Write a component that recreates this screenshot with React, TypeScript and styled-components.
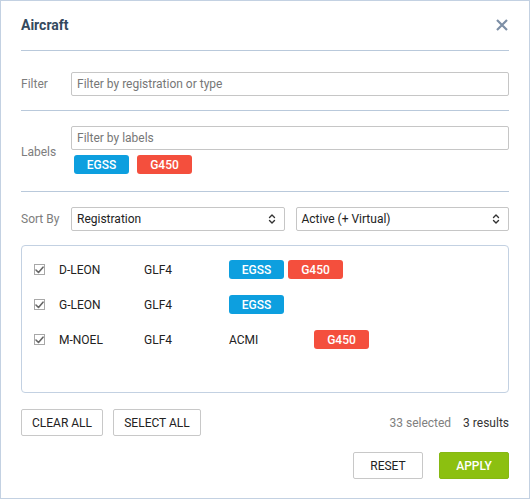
import React from "react";
import styled, { createGlobalStyle } from "styled-components";

const GlobalStyle = createGlobalStyle`
  html, body { margin: 0; padding: 0; background: #fff; }
  body { font-family: Roboto, "Liberation Sans", Arial, sans-serif; font-size: 12px; color: #333; }
  * { box-sizing: border-box; }
`;

const Dialog = styled.div`
  width: 530px;
  height: 499px;
  border: 1px solid #c3d1e2;
  padding: 0 20px;
  display: flex;
  flex-direction: column;
  background: #fff;
`;

const Header = styled.div`
  height: 50px;
  padding-bottom: 2px;
  display: flex;
  align-items: center;
  justify-content: space-between;
  border-bottom: 1px solid #b9c9db;
`;

const Title = styled.h1`
  margin: 0;
  font-size: 14px;
  font-weight: 700;
  color: #34495e;
`;

const CloseButton = styled.button`
  border: 0;
  background: none;
  padding: 0;
  width: 14px;
  height: 14px;
  display: flex;
  align-items: center;
  justify-content: center;
  cursor: pointer;
`;

const Section = styled.div<{ $pt: number; $pb: number; $line?: boolean }>`
  display: flex;
  align-items: center;
  padding-top: ${(p) => p.$pt}px;
  padding-bottom: ${(p) => p.$pb}px;
  border-bottom: ${(p) => (p.$line ? "1px solid #b9c9db" : "0")};
`;

const FieldLabel = styled.label<{ $shift?: number }>`
  width: 50px;
  flex: none;
  color: #7d7d7d;
  font-size: 12px;
  padding-top: ${(p) => p.$shift ?? 0}px;
`;

const FieldBody = styled.div`
  flex: 1;
  display: flex;
  flex-direction: column;
`;

const TextInput = styled.input`
  height: 24px;
  width: 100%;
  border: 1px solid #c6c6c6;
  border-radius: 2px;
  padding: 0 5px;
  font-family: inherit;
  font-size: 12px;
  color: #333;
  outline: none;
  &::placeholder { color: #777; }
`;

const TagRow = styled.div<{ $ml?: number }>`
  display: flex;
  gap: 8px;
  margin-top: 5px;
  margin-left: ${(p) => p.$ml ?? 0}px;
`;

const Tag = styled.span<{ $color: string }>`
  display: inline-flex;
  align-items: center;
  justify-content: center;
  width: 55px;
  height: 19px;
  border-radius: 3px;
  background: ${(p) => p.$color};
  color: #fff;
  font-size: 12px;
  font-weight: 500;
`;

const SelectGrid = styled.div`
  flex: 1;
  display: grid;
  grid-template-columns: 1fr 1fr;
  column-gap: 11px;
`;

const SelectBox = styled.div`
  height: 24px;
  border: 1px solid #c6c6c6;
  border-radius: 2px;
  padding: 0 8px 0 5px;
  display: flex;
  align-items: center;
  justify-content: space-between;
  font-size: 12px;
  color: #222;
`;

const ListBox = styled.div`
  height: 148px;
  border: 1px solid #c3d1e2;
  border-radius: 4px;
  padding: 6px 12px 0;
  display: flex;
  flex-direction: column;
`;

const Row = styled.div`
  height: 35px;
  display: flex;
  align-items: center;
`;

const Check = styled.span`
  width: 11px;
  height: 11px;
  border: 1px solid #a8a8a8;
  display: inline-flex;
  align-items: center;
  justify-content: center;
  margin-right: 14px;
  flex: none;
`;

const Cell = styled.span`
  width: 85px;
  flex: none;
  font-size: 12px;
  color: #222;
`;

const Tags = styled.div`
  display: flex;
  gap: 4px;
`;

const ActionRow = styled.div`
  margin-top: 16px;
  display: flex;
  align-items: center;
  justify-content: space-between;
`;

const ButtonGroup = styled.div<{ $gap: number }>`
  display: flex;
  gap: ${(p) => p.$gap}px;
`;

const Button = styled.button<{ $w: number; $primary?: boolean }>`
  width: ${(p) => p.$w}px;
  height: 27px;
  border: 1px solid ${(p) => (p.$primary ? "#86b813" : "#c8c8c8")};
  border-radius: 2px;
  background: ${(p) => (p.$primary ? "#8cc010" : "#fff")};
  color: ${(p) => (p.$primary ? "#fff" : "#222")};
  font-family: inherit;
  font-size: 12px;
  font-weight: ${(p) => (p.$primary ? 500 : 400)};
  text-transform: uppercase;
  padding: 0;
  cursor: pointer;
`;

const Counts = styled.div`
  display: flex;
  gap: 12px;
  font-size: 12px;
`;

const Muted = styled.span`
  color: #808080;
`;

const Dark = styled.span`
  color: #333;
`;

const Footer = styled.div`
  margin-top: 16px;
  display: flex;
  justify-content: flex-end;
  gap: 16px;
`;

const BLUE = "#0d9fdf";
const RED = "#f44f3d";

const Chevrons = () => (
  <svg width="8" height="12" viewBox="0 0 8 12" fill="none" stroke="#333" strokeWidth="1.4" strokeLinecap="round" strokeLinejoin="round">
    <path d="M1.5 4.5 L4 2 L6.5 4.5" />
    <path d="M1.5 7.5 L4 10 L6.5 7.5" />
  </svg>
);

const CheckMark = () => (
  <svg width="9" height="8" viewBox="0 0 9 8" fill="none" stroke="#666" strokeWidth="1.6" strokeLinecap="round" strokeLinejoin="round">
    <path d="M1 4 L3.5 6.5 L8 1.2" />
  </svg>
);

const rows = [
  { reg: "D-LEON", type: "GLF4", op: "", tags: [["EGSS", BLUE], ["G450", RED]] },
  { reg: "G-LEON", type: "GLF4", op: "", tags: [["EGSS", BLUE]] },
  { reg: "M-NOEL", type: "GLF4", op: "ACMI", tags: [["G450", RED]] },
];

export default function App() {
  return (
    <>
      <GlobalStyle />
      <Dialog>
        <Header>
          <Title>Aircraft</Title>
          <CloseButton aria-label="Close">
            <svg width="12" height="12" viewBox="0 0 12 12" stroke="#7d8fa6" strokeWidth="2.2" strokeLinecap="butt">
              <path d="M1 1 L11 11 M11 1 L1 11" />
            </svg>
          </CloseButton>
        </Header>

        <Section $pt={21} $pb={14} $line>
          <FieldLabel>Filter</FieldLabel>
          <FieldBody>
            <TextInput placeholder="Filter by registration or type" />
          </FieldBody>
        </Section>

        <Section $pt={15} $pb={17} $line>
          <FieldLabel $shift={3}>Labels</FieldLabel>
          <FieldBody>
            <TextInput placeholder="Filter by labels" />
            <TagRow $ml={3}>
              <Tag $color={BLUE}>EGSS</Tag>
              <Tag $color={RED}>G450</Tag>
            </TagRow>
          </FieldBody>
        </Section>

        <Section $pt={15} $pb={14}>
          <FieldLabel>Sort By</FieldLabel>
          <SelectGrid>
            <SelectBox>
              <span>Registration</span>
              <Chevrons />
            </SelectBox>
            <SelectBox>
              <span>Active (+ Virtual)</span>
              <Chevrons />
            </SelectBox>
          </SelectGrid>
        </Section>

        <ListBox>
          {rows.map((r) => (
            <Row key={r.reg}>
              <Check>
                <CheckMark />
              </Check>
              <Cell>{r.reg}</Cell>
              <Cell>{r.type}</Cell>
              {r.op && <Cell>{r.op}</Cell>}
              <Tags>
                {r.tags.map(([t, c]) => (
                  <Tag key={t} $color={c}>
                    {t}
                  </Tag>
                ))}
              </Tags>
            </Row>
          ))}
        </ListBox>

        <ActionRow>
          <ButtonGroup $gap={10}>
            <Button $w={82}>Clear All</Button>
            <Button $w={88}>Select All</Button>
          </ButtonGroup>
          <Counts>
            <Muted>33 selected</Muted>
            <Dark>3 results</Dark>
          </Counts>
        </ActionRow>

        <Footer>
          <Button $w={70}>Reset</Button>
          <Button $w={70} $primary>
            Apply
          </Button>
        </Footer>
      </Dialog>
    </>
  );
}
